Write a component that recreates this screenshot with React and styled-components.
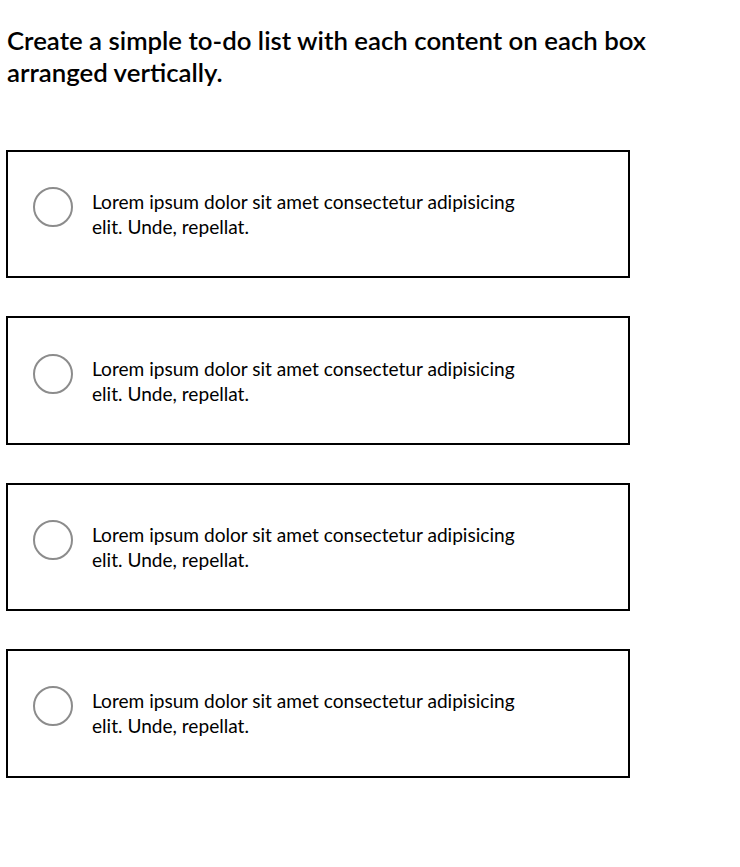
import React from 'react';
import styled, {createGlobalStyle} from "styled-components";

const GlobalStyle = createGlobalStyle`
  body {
    margin: 0;
    background: #ffffff;
    font-family: Lato, "Liberation Sans", sans-serif;
    color: #000000;
  }
`

const todos = [
  "Lorem ipsum dolor sit amet consectetur adipisicing elit. Unde, repellat.",
  "Lorem ipsum dolor sit amet consectetur adipisicing elit. Unde, repellat.",
  "Lorem ipsum dolor sit amet consectetur adipisicing elit. Unde, repellat.",
  "Lorem ipsum dolor sit amet consectetur adipisicing elit. Unde, repellat.",
];

const App = () => {
  return (
    <Page>
      <GlobalStyle/>
      <Title>Create a simple to-do list with each content on each box arranged vertically.</Title>
      <List>
        {todos.map((text, index) => (
          <TodoBox key={index}>
            <Row>
              <Check/>
              <Text>{text}</Text>
            </Row>
          </TodoBox>
        ))}
      </List>
    </Page>
  );
};

export default App;

const Page = styled.div`
  padding: 24px 6px 40px 6px;
`

const Title = styled.h1`
  margin: 0 0 62px 1px;
  width: 680px;
  font-size: 25.8px;
  line-height: 32px;
  font-weight: 600;
`

const List = styled.div`
  display: flex;
  flex-direction: column;
  gap: 38px;
`

const TodoBox = styled.div`
  width: 624px;
  height: 128.4px;
  box-sizing: border-box;
  border: 2px solid #000000;
  display: flex;
  align-items: center;
  padding-left: 25px;
`

const Row = styled.div`
  display: flex;
  align-items: flex-start;
  gap: 19px;
`

const Check = styled.div`
  width: 40px;
  height: 40px;
  box-sizing: border-box;
  border: 2px solid #8c8c8c;
  border-radius: 50%;
  margin-top: -2px;
  flex-shrink: 0;
`

const Text = styled.p`
  margin: 0;
  width: 440px;
  font-size: 19.1px;
  line-height: 25px;
`
